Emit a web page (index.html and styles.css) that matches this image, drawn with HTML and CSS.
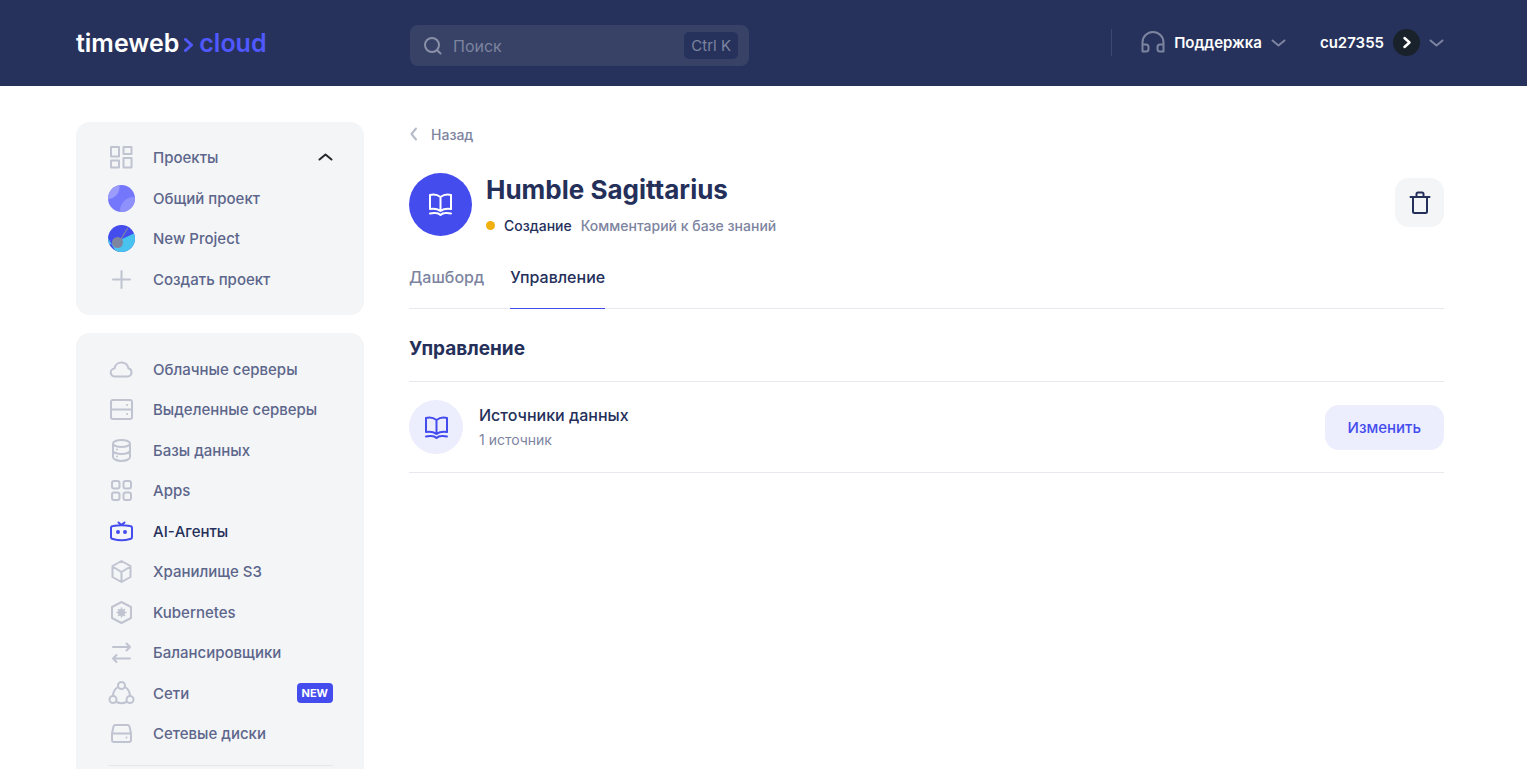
FILE: index.html
```html
<!DOCTYPE html>
<html lang="ru">
<head>
    <meta charset="UTF-8">
    <meta name="viewport" content="width=device-width, initial-scale=1.0">
    <title>Humble Sagittarius</title>
    <link rel="stylesheet" href="styles.css">
</head>
<body>
    <header class="header">
        <a href="#" class="logo">
            <span>timeweb</span>
            <svg width="10" height="14" viewBox="0 0 10 14"><path d="M1.500 1.500 7.500 7l-6 5.500"/></svg>
            <span class="logo-cloud">cloud</span>
        </a>
        <div class="header-main">
            <label class="search">
                <svg width="20" height="20" viewBox="0 0 20 20"><circle cx="9" cy="9" r="7"/><path d="m14 14 3.500 3.500"/></svg>
                <input type="text" placeholder="Поиск" aria-label="Поиск">
                <kbd>Ctrl K</kbd>
            </label>
            <div class="header-menu">
                <button class="menu-button">
                    <svg class="headphones" width="24" height="24" viewBox="0 0 24 24"><path d="M1.500 20V11.500a10.500 10.500 0 0 1 21 0V20M1.500 13.500h3.500a2.500 2.500 0 0 1 2.500 2.500v2a2.500 2.500 0 0 1-2.500 2.500H1.500zM22.500 13.500H19a2.500 2.500 0 0 0-2.500 2.500v2a2.500 2.500 0 0 0 2.500 2.500h3.500z"/></svg>
                    <span>Поддержка</span>
                    <svg class="chevron" width="15" height="8" viewBox="0 0 15 8"><path d="m1.500 1.500 6 5 6-5"/></svg>
                </button>
                <button class="menu-button">
                    <span>cu27355</span>
                    <svg width="27" height="27" viewBox="0 0 27 27"><circle cx="13.500" cy="13.500" r="13.500" fill="#19222b" stroke="none"/><path d="m11.500 9 5 4.500-5 4.500" stroke="#fff" stroke-width="2.500"/></svg>
                    <svg class="chevron" width="15" height="8" viewBox="0 0 15 8"><path d="m1.500 1.500 6 5 6-5"/></svg>
                </button>
            </div>
        </div>
    </header>

    <div class="layout">
        <aside class="sidebar">
            <nav class="card">
                <button class="nav-item">
                    <svg width="27" height="27" viewBox="0 0 27 27"><path d="M3 3h8v9.500H3zM15.500 3h8v7h-8zM3 16.500h8v7H3zM15.500 14h8v9.500h-8z"/></svg>
                    <span>Проекты</span>
                    <svg class="arrow-up" width="15" height="10" viewBox="0 0 15 10"><path d="m1.500 6.500 6-5 6 5"/></svg>
                </button>
                <a href="#" class="nav-item">
                    <svg width="27" height="27" viewBox="0 0 27 27"><clipPath id="c1"><circle cx="13.500" cy="13.500" r="13.500"/></clipPath><g clip-path="url(#c1)" stroke="none"><path fill="#7477fb" d="M0 0h27v27H0z"/><circle cx="-1" cy="2" r="12.500" fill="#9a9bfb"/><circle cx="26" cy="26" r="14" fill="#8e90fb"/></g></svg>
                    <span>Общий проект</span>
                </a>
                <a href="#" class="nav-item">
                    <svg width="27" height="27" viewBox="0 0 27 27"><clipPath id="c2"><circle cx="13.500" cy="13.500" r="13.500"/></clipPath><g clip-path="url(#c2)" stroke="none"><path fill="#444ced" d="M0 0h27v27H0z"/><path fill="#48c2ee" d="M27 8 0 20.500V27h27zM0 13l8 14H0z"/><circle cx="9.500" cy="17.500" r="5.500" fill="#7e869f"/><path d="m13 14 6.500-10.500" stroke="#7e869f" stroke-width="1.200"/></g></svg>
                    <span>New Project</span>
                </a>
                <a href="#" class="nav-item">
                    <svg width="27" height="27" viewBox="0 0 27 27"><path d="M13.500 5v17M5 13.500h17"/></svg>
                    <span>Создать проект</span>
                </a>
            </nav>

            <nav class="card services">
                <a href="#" class="nav-item">
                    <svg width="27" height="27" viewBox="0 0 27 27"><path d="M7 20.500a4 4 0 0 1-.5-8C7 9 9.800 6.500 13.500 6.500c3.500 0 6.200 2.300 6.900 5.800a4.200 4.200 0 0 1-.4 8.200z"/></svg>
                    <span>Облачные серверы</span>
                </a>
                <a href="#" class="nav-item">
                    <svg width="27" height="27" viewBox="0 0 27 27"><rect x="3" y="4" width="21" height="19" rx="2"/><path d="M3 13.500h21"/><path d="M19 9h.1M19 18h.1"/></svg>
                    <span>Выделенные серверы</span>
                </a>
                <a href="#" class="nav-item">
                    <svg width="27" height="27" viewBox="0 0 27 27"><ellipse cx="13.500" cy="6.500" rx="8.500" ry="3.500"/><path d="M5 7v13c0 2 3.800 4 8.500 4s8.500-2 8.500-4V7M5 13.500c0 2 3.800 3.500 8.500 3.500s8.500-1.500 8.500-3.500M9 12.500v.1M9 19.500v.1"/></svg>
                    <span>Базы данных</span>
                </a>
                <a href="#" class="nav-item">
                    <svg width="27" height="27" viewBox="0 0 27 27"><rect x="4" y="4" width="7.500" height="7.500" rx="2"/><rect x="15.500" y="4" width="7.500" height="7.500" rx="2"/><rect x="4" y="15.500" width="7.500" height="7.500" rx="2"/><rect x="15.500" y="15.500" width="7.500" height="7.500" rx="2"/></svg>
                    <span>Apps</span>
                </a>
                <a href="#" class="nav-item active">
                    <svg width="27" height="27" viewBox="0 0 27 27"><path d="M5 8q8.500-1.500 17 0 2 .3 2 2v9q0 1.700-2 2-8.500 2.500-17 0-2-.3-2-2v-9q0-1.700 2-2zM10.500 4.500l3 2.500 3-2.500"/><circle cx="10" cy="14" r="1"/><circle cx="17" cy="14" r="1"/></svg>
                    <span>AI-Агенты</span>
                </a>
                <a href="#" class="nav-item">
                    <svg width="27" height="27" viewBox="0 0 27 27"><path d="m13.500 3 9 5v11l-9 5-9-5V8zM4.500 8.500l9 5.500 9-5.500M13.500 14v10"/></svg>
                    <span>Хранилище S3</span>
                </a>
                <a href="#" class="nav-item">
                    <svg width="27" height="27" viewBox="0 0 27 27"><path d="m13.500 3 9.500 5v11l-9.500 5-9.500-5V8z"/><circle cx="13.500" cy="13.500" r="2.500" fill="currentColor"/><path d="M13.500 9v9M9 13.500h9M10.500 10.500l6 6M16.500 10.500l-6 6" stroke-width="1.500"/></svg>
                    <span>Kubernetes</span>
                </a>
                <a href="#" class="nav-item">
                    <svg width="27" height="27" viewBox="0 0 27 27"><path d="M5 8h17M18.500 4.500 22 8l-3.500 3.500M22 19.500H5M8.500 16 5 19.500 8.500 23"/></svg>
                    <span>Балансировщики</span>
                </a>
                <a href="#" class="nav-item">
                    <svg width="27" height="27" viewBox="0 0 27 27"><circle cx="13.500" cy="5.500" r="3.500"/><circle cx="5" cy="19.500" r="3.500"/><circle cx="22" cy="19.500" r="3.500"/><path d="M10 7Q5 10 5 16M17 7q5 3 5 9M8.500 22q5 2.500 10 0"/></svg>
                    <span>Сети</span>
                    <span class="badge">NEW</span>
                </a>
                <a href="#" class="nav-item">
                    <svg width="27" height="27" viewBox="0 0 27 27"><path d="M7.500 5h12a2 2 0 0 1 2 1.500L23 13.500V20a2 2 0 0 1-2 2H6a2 2 0 0 1-2-2v-6.500l1.500-7A2 2 0 0 1 7.500 5zM4 13.500h19"/><path d="M18.500 17.500v.1"/></svg>
                    <span>Сетевые диски</span>
                </a>
                <hr>
            </nav>
        </aside>

        <main class="content">
            <a href="#" class="back">
                <svg width="10" height="14" viewBox="0 0 10 14"><path d="M7 1.500 2.500 7 7 12.500"/></svg>
                <span>Назад</span>
            </a>

            <div class="title-row">
                <div class="title-icon">
                    <svg width="27" height="27" viewBox="0 0 27 27"><path d="M13.500 6Q9 2.500 3 4v14q6.500-1 10.500 2 4-3 10.500-2V4q-6-1.500-10.500 2zV20M3 22.500q3-.8 5.500-.5 3 0 5 2 2-2 5-2 2.500-.3 5.500.5"/></svg>
                </div>
                <div class="title-text">
                    <h1>Humble Sagittarius</h1>
                    <p class="status">
                        <span class="dot"></span>
                        <span class="state">Создание</span>
                        <span>Комментарий к базе знаний</span>
                    </p>
                </div>
                <button class="delete" aria-label="Удалить">
                    <svg width="24" height="26" viewBox="0 0 24 26"><path d="M2.500 7h19M5 7v14.500q0 1.500 1.500 1.500h11q1.500 0 1.500-1.500V7M8.500 7V4q0-1.500 1.500-1.500h4q1.500 0 1.500 1.500v3"/></svg>
                </button>
            </div>

            <nav class="tabs">
                <a href="#">Дашборд</a>
                <a href="#" class="current">Управление</a>
            </nav>

            <h2>Управление</h2>
            <div class="source">
                <div class="source-icon">
                    <svg width="27" height="27" viewBox="0 0 27 27"><path d="M13.500 6Q9 2.500 3 4v14q6.500-1 10.500 2 4-3 10.500-2V4q-6-1.500-10.500 2zV20M3 22.500q3-.8 5.500-.5 3 0 5 2 2-2 5-2 2.500-.3 5.500.5"/></svg>
                </div>
                <div class="source-text">
                    <h3>Источники данных</h3>
                    <p>1 источник</p>
                </div>
                <button class="edit">Изменить</button>
            </div>
        </main>
    </div>
</body>
</html>
```
FILE: styles.css
```css
* {
    box-sizing: border-box;
}

body {
    margin: 0;
    height: 100vh;
    overflow: hidden;
    background-color: #fff;
    color: #25305a;
    font-family: Inter, Arial, sans-serif;
    font-size: 15px;
    font-weight: 500;
}

a {
    color: inherit;
    text-decoration: none;
}

button {
    border: none;
    background: none;
    padding: 0;
    font: inherit;
    color: inherit;
    cursor: pointer;
}

h1, h2, h3, p {
    margin: 0;
}

svg {
    flex: none;
    fill: none;
    stroke: currentColor;
    stroke-width: 2;
    stroke-linecap: round;
    stroke-linejoin: round;
}

/* Header */
.header {
    display: flex;
    align-items: center;
    gap: 46px;
    height: 86px;
    padding: 0 83px 0 76px;
    background-color: #26325c;
    color: #fff;
}

.logo {
    display: flex;
    align-items: center;
    gap: 5px;
    width: 288px;
    font-size: 25px;
    font-weight: 600;
    line-height: 30px;
}

.logo svg {
    margin-top: 3px;
    stroke: #5058ff;
    stroke-width: 3;
}

.logo-cloud {
    color: #5058ff;
}

.header-main {
    flex: 1;
    display: flex;
    align-items: flex-start;
    justify-content: space-between;
    padding-top: 5px;
}

.search {
    display: flex;
    align-items: center;
    gap: 10px;
    width: 339px;
    height: 41px;
    padding: 0 11px 0 13px;
    border-radius: 8px;
    background-color: #374266;
    color: #8a90a8;
}

.search input {
    flex: 1;
    min-width: 0;
    padding: 0;
    border: none;
    outline: none;
    background: none;
    color: #fff;
    font: inherit;
    font-size: 16px;
    font-weight: 400;
}

.search input::placeholder {
    color: #7d849f;
}

.search kbd {
    padding: 0 7px;
    border-radius: 5px;
    background-color: #26325c;
    color: #7d849f;
    font-family: inherit;
    font-size: 15px;
    font-weight: 400;
    line-height: 27px;
}

.header-menu {
    display: flex;
    align-items: center;
    gap: 34px;
    height: 27px;
    margin-top: 4px;
    padding-left: 29px;
    border-left: 1px solid #3d4870;
}

.menu-button {
    display: flex;
    align-items: center;
    gap: 9px;
    font-weight: 600;
}

.headphones,
.chevron {
    color: #7d849f;
}

/* Sidebar */
.layout {
    display: flex;
    align-items: flex-start;
    gap: 45px;
    padding: 36px 83px 0 76px;
}

.sidebar {
    flex: none;
    display: grid;
    gap: 18px;
    width: 288px;
}

.card {
    display: grid;
    grid-auto-rows: 41px 40px;
    padding: 15px 31px 16px 32px;
    border-radius: 14px;
    background-color: #f4f5f7;
    color: #5c668b;
}

.services {
    grid-auto-rows: 40px 41px;
    padding-top: 16px;
}

.nav-item {
    display: flex;
    align-items: center;
    gap: 18px;
}

.nav-item > svg {
    color: #c0c4d1;
}

.nav-item .arrow-up {
    margin-left: auto;
    color: #25282d;
}

.nav-item.active {
    color: #25305a;
}

.nav-item.active svg {
    color: #444ced;
}

.badge {
    margin-left: auto;
    padding: 0 5px;
    border-radius: 4px;
    background-color: #444ced;
    color: #fff;
    font-size: 11px;
    font-weight: 700;
    line-height: 20px;
}

.card hr {
    width: 100%;
    margin: 11px 0;
    border: none;
    border-top: 1px solid #e5e7eb;
}

/* Content */
.content {
    flex: 1;
    min-width: 0;
}

.back {
    display: flex;
    align-items: center;
    gap: 12px;
    height: 24px;
    color: #7d849f;
    font-size: 14px;
}

.back svg {
    color: #b7bbc9;
}

.title-row {
    display: flex;
    align-items: center;
    gap: 14px;
    margin-top: 27px;
}

.title-icon,
.source-icon {
    flex: none;
    display: flex;
    align-items: center;
    justify-content: center;
    width: 63px;
    height: 63px;
    border-radius: 50%;
    background-color: #444ced;
    color: #fff;
}

.title-text {
    flex: 1;
}

h1 {
    font-size: 26px;
    font-weight: 700;
    line-height: 32px;
}

.status {
    display: flex;
    align-items: center;
    gap: 9px;
    margin-top: 10px;
    color: #7d849f;
    font-size: 14px;
    line-height: 20px;
}

.dot {
    width: 9px;
    height: 9px;
    border-radius: 50%;
    background-color: #f0b010;
}

.state {
    color: #25305a;
}

.delete {
    align-self: flex-start;
    width: 49px;
    height: 49px;
    margin-top: 5px;
    border-radius: 14px;
    background-color: #f4f5f7;
}

.delete svg {
    display: block;
    margin: 0 auto;
}

.tabs {
    display: flex;
    gap: 26px;
    margin-top: 22px;
    border-bottom: 1px solid #e8e9ee;
    color: #7d849f;
    font-size: 16px;
    line-height: 38px;
}

.tabs a {
    margin-bottom: -1px;
    padding-bottom: 12px;
    border-bottom: 1px solid transparent;
}

.tabs .current {
    border-color: #444ced;
    color: #25305a;
}

h2 {
    padding: 24px 0 16px;
    border-bottom: 1px solid #e8e9ee;
    font-size: 19px;
    font-weight: 700;
    line-height: 32px;
}

.source {
    display: flex;
    align-items: center;
    gap: 16px;
    padding: 18px 0;
    border-bottom: 1px solid #e8e9ee;
}

.source-icon {
    width: 54px;
    height: 54px;
    background-color: #ecedfd;
    color: #444ced;
}

.source-text {
    flex: 1;
}

h3 {
    font-size: 16px;
    font-weight: 500;
    line-height: 26px;
}

.source-text p {
    color: #7d849f;
    font-size: 14px;
    font-weight: 400;
    line-height: 24px;
}

.edit {
    height: 45px;
    padding: 0 23px;
    border-radius: 14px;
    background-color: #ecedfd;
    color: #444ced;
}
```
